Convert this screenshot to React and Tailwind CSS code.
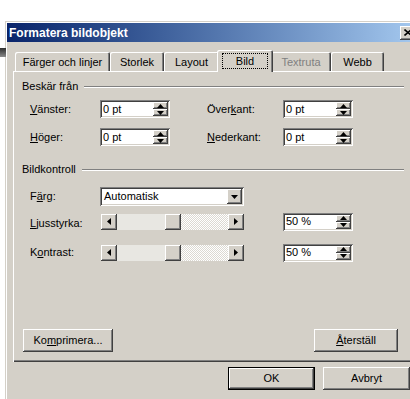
import React from "react";

const raised =
  "shadow-[inset_-1px_-1px_#404040,inset_1px_1px_#ffffff,inset_-2px_-2px_#808080,inset_2px_2px_#d4d0c8]";
const sunken =
  "shadow-[inset_1px_1px_#808080,inset_-1px_-1px_#ffffff,inset_2px_2px_#404040,inset_-2px_-2px_#d4d0c8]";

function Tri({ dir }) {
  if (dir === "up")
    return (
      <svg width="7" height="4" viewBox="0 0 7 4">
        <path d="M3.5 0 L7 4 L0 4 Z" fill="#000" />
      </svg>
    );
  if (dir === "down")
    return (
      <svg width="7" height="4" viewBox="0 0 7 4">
        <path d="M0 0 L7 0 L3.5 4 Z" fill="#000" />
      </svg>
    );
  if (dir === "left")
    return (
      <svg width="4" height="7" viewBox="0 0 4 7">
        <path d="M4 0 L4 7 L0 3.5 Z" fill="#000" />
      </svg>
    );
  return (
    <svg width="4" height="7" viewBox="0 0 4 7">
      <path d="M0 0 L4 3.5 L0 7 Z" fill="#000" />
    </svg>
  );
}

function Spin({ value }) {
  return (
    <div className={`w-[70px] h-[18px] bg-white p-[2px] flex ${sunken}`}>
      <div className="flex-1 flex items-center pl-[1px]">{value}</div>
      <div className="w-[15px] flex flex-col">
        <div className={`flex-1 bg-[#d4d0c8] flex items-center justify-center ${raised}`}>
          <Tri dir="up" />
        </div>
        <div className={`flex-1 bg-[#d4d0c8] flex items-center justify-center ${raised}`}>
          <Tri dir="down" />
        </div>
      </div>
    </div>
  );
}

function Group({ title }) {
  return (
    <div className="flex items-center pl-[9px] pr-[10px] h-[13px]">
      <span>{title}</span>
      <div className="flex-1 ml-[6px] h-[2px] border-t border-t-[#808080] border-b border-b-white" />
    </div>
  );
}

function Slider() {
  return (
    <div className="ml-[1px] w-[143px] h-[16px] flex">
      <div className={`w-[16px] h-[16px] bg-[#d4d0c8] flex items-center justify-center ${raised}`}>
        <Tri dir="left" />
      </div>
      <div className="flex-1 bg-[#e8e7e2]" />
      <div className={`w-[16px] h-[16px] bg-[#d4d0c8] ${raised}`} />
      <div className="flex-1 bg-[repeating-conic-gradient(#ffffff_0_25%,#dcd9d2_0_50%)] bg-[length:2px_2px]" />
      <div className={`w-[16px] h-[16px] bg-[#d4d0c8] flex items-center justify-center ${raised}`}>
        <Tri dir="right" />
      </div>
    </div>
  );
}

function Tab({ w, children, disabled }) {
  return (
    <div
      className={`h-[19px] bg-[#d4d0c8] rounded-t-[2px] flex items-center justify-center pt-[2px] shadow-[inset_1px_1px_#ffffff,inset_-1px_0_#404040,inset_-2px_0_#808080] ${w} ${
        disabled ? "text-[#808080]" : ""
      }`}
    >
      {children}
    </div>
  );
}

export default function App() {
  return (
    <div className="w-[410px] h-[399px] overflow-hidden bg-white relative font-['Liberation_Sans',Arial,sans-serif] text-[11px] leading-[13px] text-black">
      <div className="absolute left-0 top-[48px] w-[6px] h-[9px] bg-gradient-to-b from-[#2e2e2e] to-[#8c8c8c]" />
      <div className="ml-[5px] mt-[21px] w-[415px] h-[380px] bg-[#d4d0c8] border-l border-t border-[#d4d0c8] shadow-[inset_1px_1px_#ffffff] pl-[1px] pt-[1px]">
        {/* title bar */}
        <div className="h-[19px] flex items-center justify-between pl-[2px] pr-[4px] bg-gradient-to-r from-[#0a246a] to-[#a6caf0]">
          <span className="text-white font-bold text-[12px] leading-[14px]">Formatera bildobjekt</span>
          <div className={`w-[16px] h-[14px] bg-[#d4d0c8] flex items-center justify-center ${raised}`}>
            <svg width="8" height="7" viewBox="0 0 8 7">
              <path d="M0.5 0.5 L7.5 6.5 M7.5 0.5 L0.5 6.5" stroke="#000" strokeWidth="1.6" />
            </svg>
          </div>
        </div>

        {/* body */}
        <div className="pl-[6px] pt-[8px]">
          <div className="relative z-10 flex items-end h-[21px] pl-[2px]">
            <Tab w="w-[95px]">Färger och linjer</Tab>
            <Tab w="w-[54px]">Storlek</Tab>
            <Tab w="w-[55px]">Layout</Tab>
            <div className="relative z-10 -mx-[2px] mb-[-1px] w-[56px] h-[22px] bg-[#d4d0c8] rounded-t-[2px] flex justify-center pt-[3px] shadow-[inset_1px_1px_#ffffff,inset_-1px_0_#404040,inset_-2px_0_#808080]">
              <div className="w-[46px] h-[16px] flex items-center justify-center border border-dotted border-black">
                Bild
              </div>
            </div>
            <Tab w="w-[60px]" disabled>
              Textruta
            </Tab>
            <Tab w="w-[53px]">Webb</Tab>
          </div>

          {/* panel */}
          <div className="w-[401px] h-[291px] pt-[9px] flex flex-col shadow-[inset_1px_1px_#ffffff,inset_-1px_-1px_#404040,inset_-2px_-2px_#808080]">
            <Group title="Beskär från" />
            <div className="flex items-center h-[18px] pl-[17px] mt-[7px]">
              <div className="w-[70px]">
                <span className="underline">V</span>änster:
              </div>
              <Spin value="0 pt" />
              <div className="ml-[37px] w-[76px]">
                Över<span className="underline">k</span>ant:
              </div>
              <Spin value="0 pt" />
            </div>
            <div className="flex items-center h-[18px] pl-[17px] mt-[10px]">
              <div className="w-[70px]">
                <span className="underline">H</span>öger:
              </div>
              <Spin value="0 pt" />
              <div className="ml-[37px] w-[76px]">
                <span className="underline">N</span>ederkant:
              </div>
              <Spin value="0 pt" />
            </div>

            <div className="mt-[17px]">
              <Group title="Bildkontroll" />
            </div>
            <div className="flex items-center h-[19px] pl-[17px] mt-[11px]">
              <div className="w-[70px]">
                F<span className="underline">ä</span>rg:
              </div>
              <div className={`w-[144px] h-[19px] bg-white p-[2px] flex ${sunken}`}>
                <div className="flex-1 flex items-center pl-[2px]">Automatisk</div>
                <div className={`w-[15px] bg-[#d4d0c8] flex items-center justify-center ${raised}`}>
                  <Tri dir="down" />
                </div>
              </div>
            </div>
            <div className="flex items-center h-[19px] pl-[17px] mt-[6px]">
              <div className="w-[70px] pt-[3px]">
                <span className="underline">L</span>jusstyrka:
              </div>
              <Slider />
              <div className="ml-[39px]">
                <Spin value="50 %" />
              </div>
            </div>
            <div className="flex items-center h-[19px] pl-[17px] mt-[12px]">
              <div className="w-[70px]">
                K<span className="underline">o</span>ntrast:
              </div>
              <Slider />
              <div className="ml-[39px]">
                <Spin value="50 %" />
              </div>
            </div>

            <div className="flex justify-between pl-[10px] pr-[16px] mt-[67px]">
              <div className={`w-[90px] h-[23px] bg-[#d4d0c8] flex items-center justify-center ${raised}`}>
                <span>
                  Ko<span className="underline">m</span>primera...
                </span>
              </div>
              <div className={`w-[84px] h-[23px] bg-[#d4d0c8] flex items-center justify-center ${raised}`}>
                <span>
                  <span className="underline">Å</span>terställ
                </span>
              </div>
            </div>
          </div>

          {/* dialog buttons */}
          <div className="w-[401px] mt-[5px] flex justify-end gap-[8px] pr-[4px]">
            <div className="w-[87px] h-[23px] border border-black">
              <div className={`w-full h-full bg-[#d4d0c8] flex items-center justify-center ${raised}`}>OK</div>
            </div>
            <div className={`w-[87px] h-[23px] bg-[#d4d0c8] flex items-center justify-center ${raised}`}>
              Avbryt
            </div>
          </div>
        </div>
      </div>
    </div>
  );
}
